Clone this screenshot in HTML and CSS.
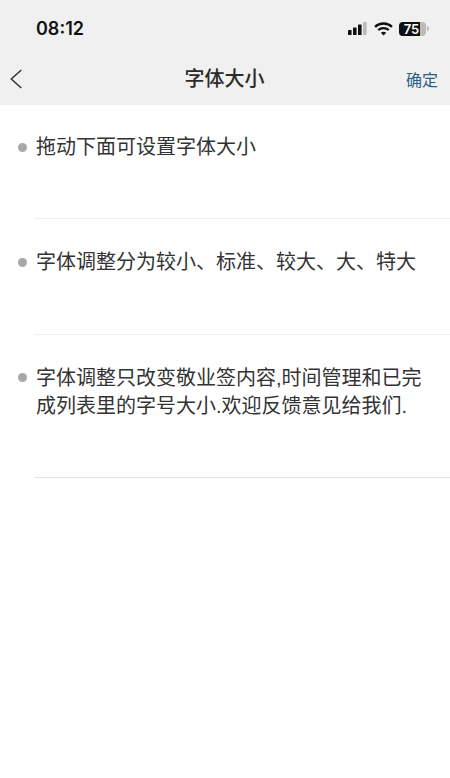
FILE: index.html
```html
<!DOCTYPE html>
<html lang="zh">
<head>
<meta charset="utf-8">
<title>字体大小</title>
<link rel="stylesheet" href="styles.css">
</head>
<body>
<header class="top">
  <div class="status">
    <span class="time">08:12</span>
    <div class="status-icons">
      <svg class="signal" width="19" height="13" viewBox="0 0 19 13"><rect x="0" y="8" width="3.6" height="5" rx=".6" fill="#111"/><rect x="5" y="5.5" width="3.6" height="7.5" rx=".6" fill="#111"/><rect x="10" y="2.5" width="3.6" height="10.500" rx=".6" fill="#111"/><rect x="15" y="0" width="3.6" height="13" rx=".6" fill="#bbb"/></svg>
      <svg class="wifi" width="19" height="14" viewBox="0 0 19 14"><path d="M1 4.800C5.800.4 13.200.4 18 4.800" fill="none" stroke="#111" stroke-width="2.300"/><path d="M4.200 8C7.200 5.400 11.800 5.400 14.800 8" fill="none" stroke="#111" stroke-width="2.300"/><path d="M9.500 13.600 6.800 10.700C8.400 9.500 10.600 9.500 12.200 10.700Z" fill="#111"/></svg>
      <div class="battery"><div class="battery-body"><span class="battery-fill"></span><span class="battery-num">75</span></div><span class="battery-cap"></span></div>
    </div>
  </div>
  <nav class="nav">
    <svg class="back" width="12" height="20" viewBox="0 0 12 20"><path d="M11.300 1 1.300 10l10 9" fill="none" stroke="#333" stroke-width="1.500"/></svg>
    <h1 class="title">字体大小</h1>
    <span class="confirm">确定</span>
  </nav>
</header>
<main class="list">
  <section class="item item-a"><span class="dot"></span><p class="text">拖动下面可设置字体大小</p></section>
  <section class="item item-b"><span class="dot"></span><p class="text">字体调整分为较小、标准、较大、大、特大</p></section>
  <section class="item item-c"><span class="dot"></span><p class="text">字体调整只改变敬业签内容,时间管理和已完成列表里的字号大小.欢迎反馈意见给我们.</p></section>
</main>
</body>
</html>
```
FILE: styles.css
```css
* { box-sizing: border-box; }
html, body { margin: 0; padding: 0; }
body {
  width: 450px;
  height: 778px;
  overflow: hidden;
  background: #fff;
  font-family: "Liberation Sans", "Noto Sans CJK SC", sans-serif;
  color: #333;
}
.top { height: 105px; background: #f0f0f0; }
.status {
  height: 54px;
  padding: 18px 21px 0 36px;
  display: flex;
  justify-content: space-between;
  align-items: flex-start;
}
.time { font-family: Inter, sans-serif; font-size: 18px; font-weight: 600; line-height: 22px; color: #111; }
.status-icons { display: flex; align-items: center; gap: 7px; height: 21px; }
.wifi { margin-right: -1px; }
.battery { display: flex; align-items: center; gap: 1px; }
.battery-body {
  position: relative;
  width: 27px;
  height: 14px;
  border-radius: 4px;
  overflow: hidden;
  background: #bbb;
}
.battery-fill { position: absolute; left: 0; top: 0; bottom: 0; width: 21px; background: #111; }
.battery-num {
  position: absolute;
  left: 4px;
  top: 0;
  width: 17px;
  text-align: center;
  font-family: Inter, sans-serif;
  font-size: 13px;
  font-weight: 600;
  line-height: 14px;
  color: #fff;
}
.battery-cap { width: 2px; height: 5px; background: #bbb; border-radius: 0 2px 2px 0; }
.nav {
  height: 51px;
  padding: 0 12px 0 10px;
  display: flex;
  align-items: center;
  justify-content: space-between;
  position: relative;
}
.back { margin-top: -1px; }
.title {
  position: absolute;
  left: -1px;
  right: 0;
  top: 11px;
  margin: 0;
  text-align: center;
  font-size: 20px;
  font-weight: 500;
  line-height: 28px;
  color: #2b2b2b;
}
.confirm { font-size: 16px; color: #2a5f85; margin-top: -1px; }
.item { position: relative; margin-left: 34px; border-bottom: 1px solid #eeeeee; }
.item-a { height: 114px; padding-top: 28px; }
.item-b { height: 116px; padding-top: 29px; }
.item-c { height: 143px; padding-top: 29px; border-bottom-color: #e4e4e4; }
.dot {
  position: absolute;
  left: -16px;
  top: 38px;
  width: 9px;
  height: 9px;
  border-radius: 50%;
  background: #a8a8a8;
}
.item-b .dot { top: 39px; }
.text { margin: 0 0 0 2px; font-size: 20px; line-height: 29px; color: #333; padding-right: 26px; }
.item-c .text { line-height: 28px; }
```
